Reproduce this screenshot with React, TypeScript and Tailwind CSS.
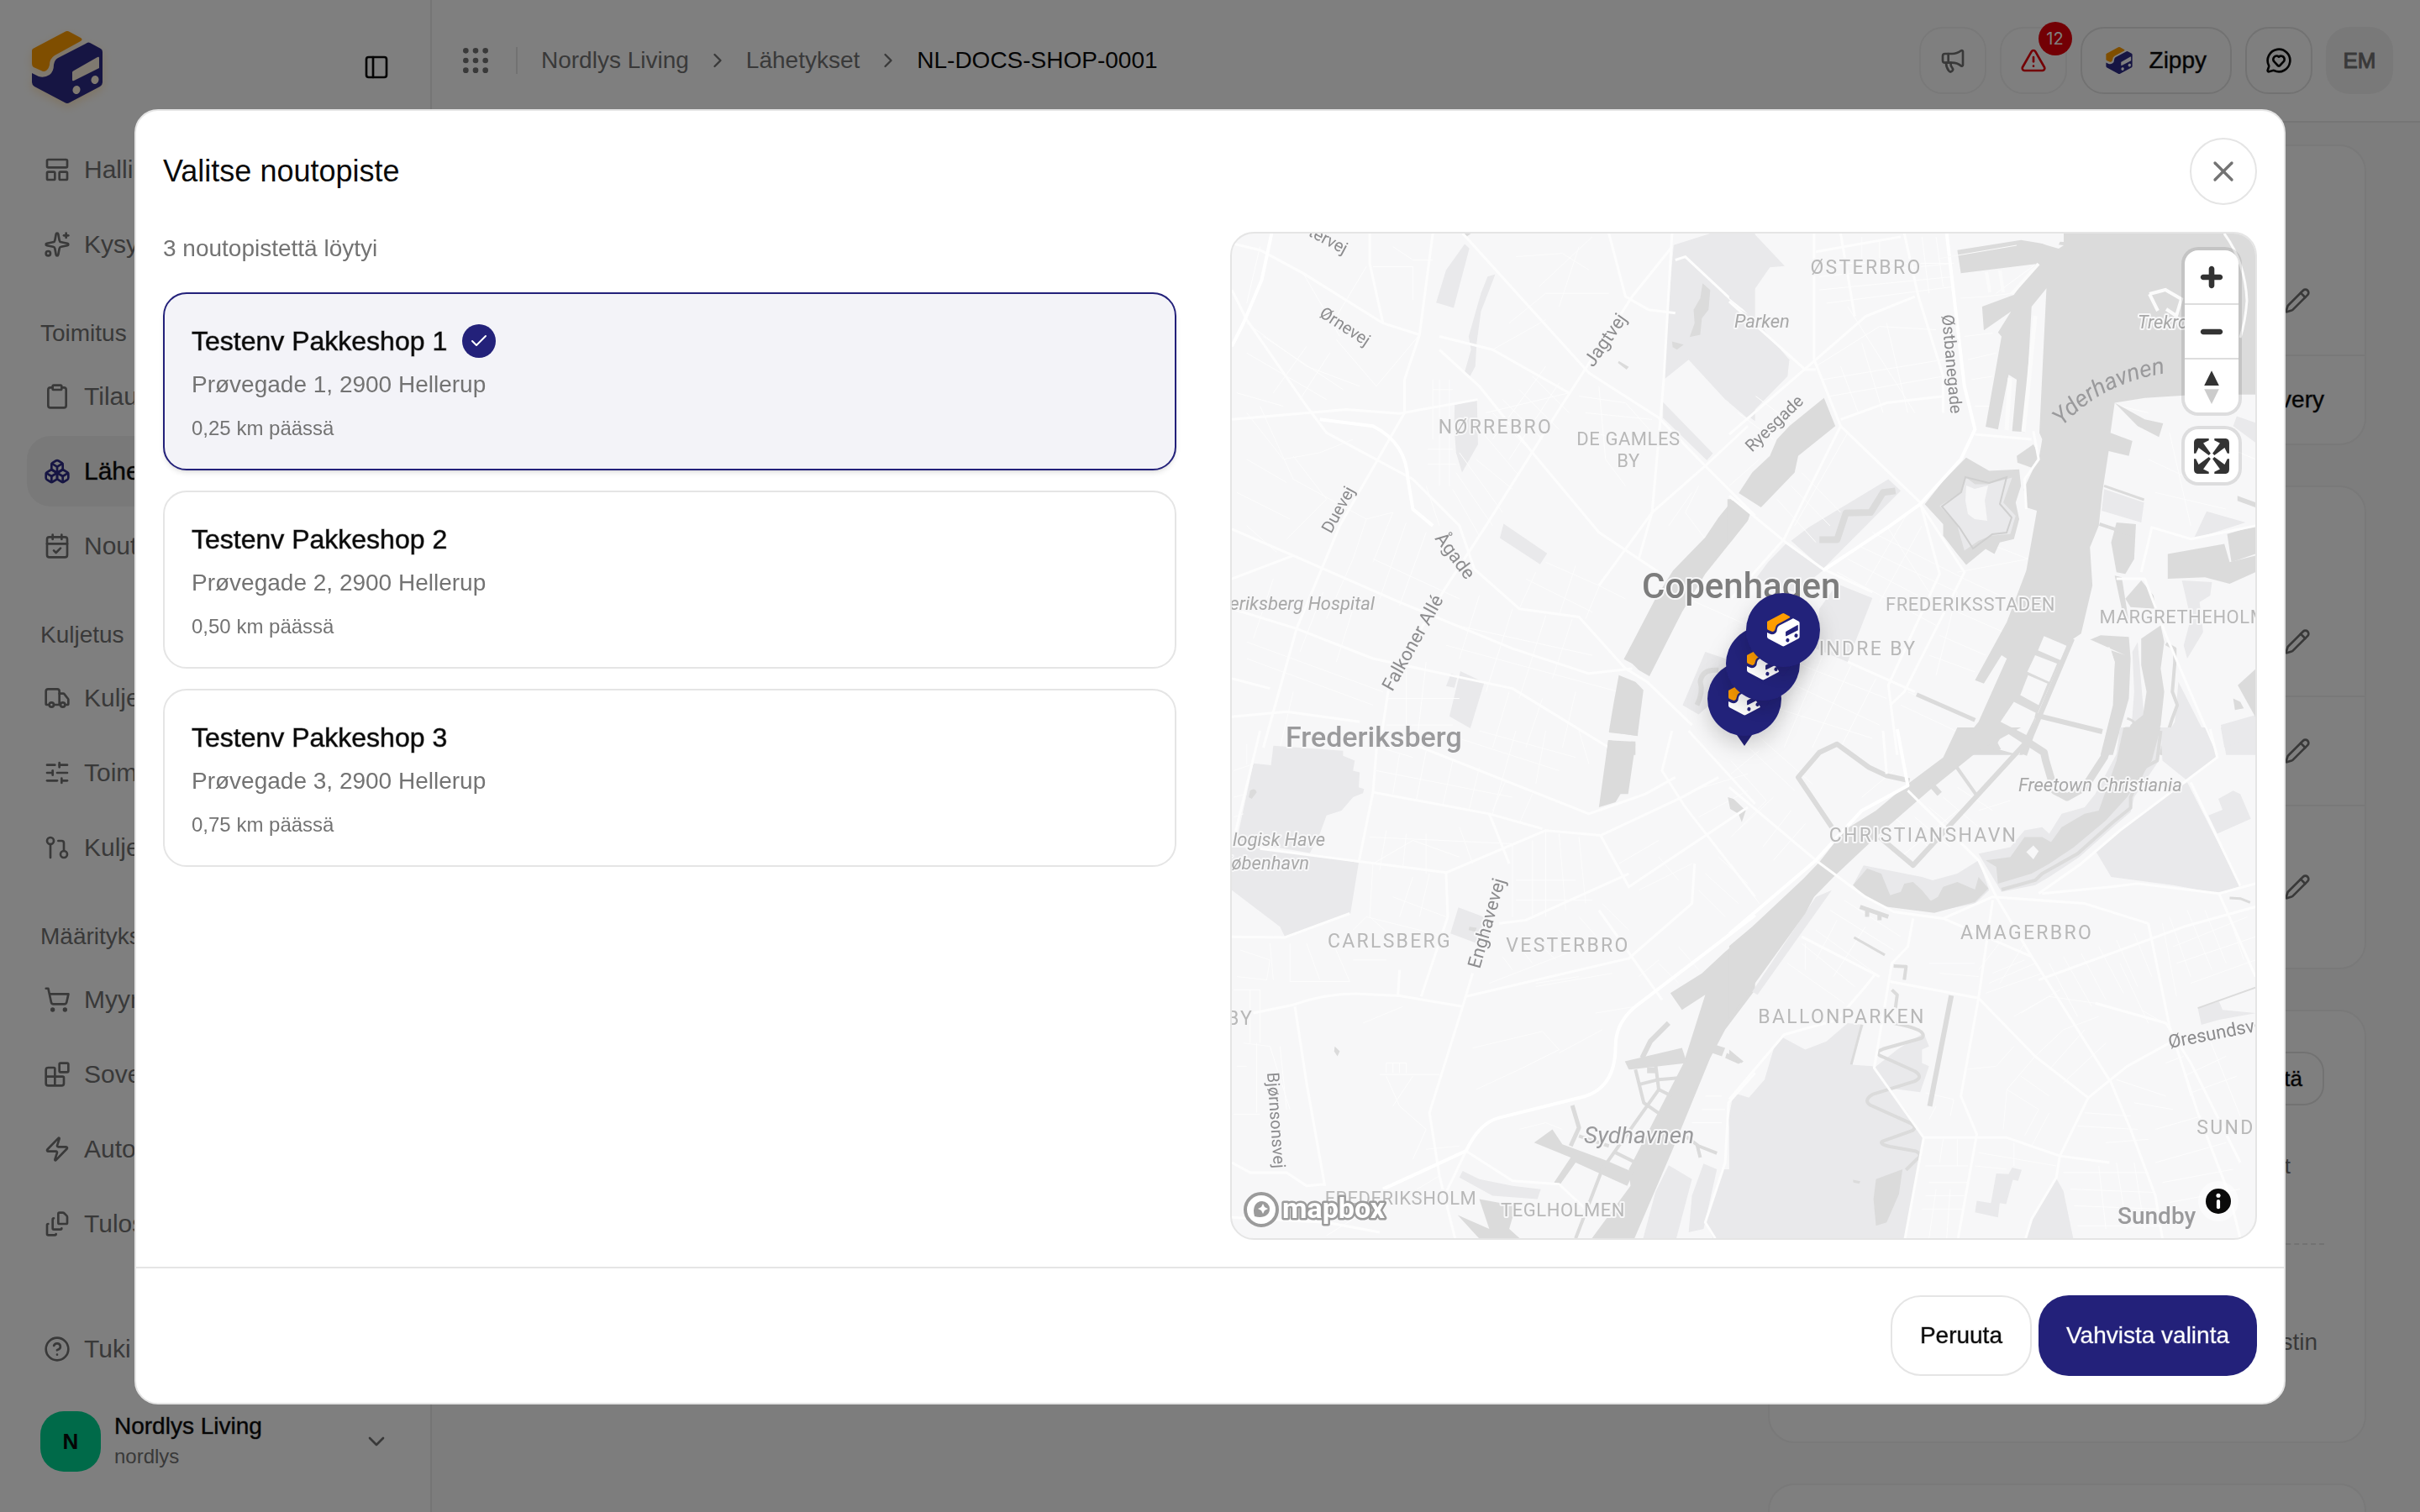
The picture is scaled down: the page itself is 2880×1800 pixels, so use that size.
import { useState } from "react"
import type { ReactNode } from "react"
import {
  Blocks,
  Boxes,
  CalendarCheck,
  Check,
  ChevronDown,
  ChevronRight,
  CircleQuestionMark,
  Clipboard,
  FileStack,
  GitPullRequest,
  Grip,
  LayoutPanelTop,
  Megaphone,
  MessageCircleHeart,
  PanelLeft,
  Pencil,
  ShoppingCart,
  SlidersHorizontal,
  Sparkles,
  TriangleAlert,
  Truck,
  X,
  Zap,
} from "lucide-react"
import type { LucideIcon } from "lucide-react"

type NavEntry = { label: string; icon: LucideIcon; active?: boolean }
type NavGroup = { title?: string; items: NavEntry[] }

const navGroups: NavGroup[] = [
  {
    items: [
      { label: "Hallinta", icon: LayoutPanelTop },
      { label: "Kysy", icon: Sparkles },
    ],
  },
  {
    title: "Toimitus",
    items: [
      { label: "Tilaus", icon: Clipboard },
      { label: "Lähetys", icon: Boxes, active: true },
      { label: "Nouto", icon: CalendarCheck },
    ],
  },
  {
    title: "Kuljetus",
    items: [
      { label: "Kuljetus", icon: Truck },
      { label: "Toimitus", icon: SlidersHorizontal },
      { label: "Kuljetus", icon: GitPullRequest },
    ],
  },
  {
    title: "Määritykset",
    items: [
      { label: "Myynti", icon: ShoppingCart },
      { label: "Sovellus", icon: Blocks },
      { label: "Autom.", icon: Zap },
      { label: "Tulostus", icon: FileStack },
    ],
  },
]

const pickupPoints = [
  { id: 1, name: "Testenv Pakkeshop 1", address: "Prøvegade 1, 2900 Hellerup", distance: "0,25 km päässä" },
  { id: 2, name: "Testenv Pakkeshop 2", address: "Prøvegade 2, 2900 Hellerup", distance: "0,50 km päässä" },
  { id: 3, name: "Testenv Pakkeshop 3", address: "Prøvegade 3, 2900 Hellerup", distance: "0,75 km päässä" },
]

export default function App() {
  const [selected, setSelected] = useState(1)

  return (
    <div className="relative flex h-screen overflow-hidden bg-white font-['Liberation_Sans',Arial,sans-serif] text-[28px] leading-10 text-[#0a0a0a]">
      <Sidebar />
      <div className="flex min-w-0 flex-1 flex-col">
        <TopBar />
        <ShipmentDetails />
      </div>

      {/* overlay + dialog */}
      <div className="fixed inset-0 z-10 flex items-center justify-center bg-black/50 px-40 pt-0.5">
        <div
          role="dialog"
          aria-modal="true"
          aria-labelledby="dialog-title"
          className="flex w-full max-w-[2560px] flex-col rounded-[28px] border-2 border-[#e5e5e5] bg-white"
        >
          <div className="flex items-center justify-between px-8 pt-8">
            <h2 id="dialog-title" className="text-[36px] leading-[48px]">
              Valitse noutopiste
            </h2>
            <button
              type="button"
              aria-label="Sulje"
              className="flex size-20 items-center justify-center rounded-full border-2 border-[#e5e5e5] text-[#737373]"
            >
              <X className="size-10" />
            </button>
          </div>

          <div className="grid grid-cols-2 gap-12 p-8">
            <div className="flex flex-col pr-4">
              <p className="mb-8 text-[#737373]">3 noutopistettä löytyi</p>
              <div className="flex flex-col gap-6">
                {pickupPoints.map((p) => (
                  <PickupCard
                    key={p.id}
                    name={p.name}
                    address={p.address}
                    distance={p.distance}
                    selected={p.id === selected}
                    onSelect={() => setSelected(p.id)}
                  />
                ))}
              </div>
            </div>
            <PickupMap />
          </div>

          <div className="flex justify-end gap-2 border-t-2 border-[#e5e5e5] p-8">
            <button
              type="button"
              className="h-24 rounded-[36px] border-2 border-[#e5e5e5] px-[33px] [-webkit-text-stroke:1px_rgb(10_10_10/0.4)]"
            >
              Peruuta
            </button>
            <button
              type="button"
              className="h-24 rounded-[36px] bg-[#23217a] px-[33px] text-white [-webkit-text-stroke:1px_rgb(255_255_255/0.3)]"
            >
              Vahvista valinta
            </button>
          </div>
        </div>
      </div>
    </div>
  )
}

function Sidebar() {
  return (
    <aside className="flex w-[514px] shrink-0 flex-col border-r-2 border-[#ebebeb] bg-white">
      <div className="flex h-40 shrink-0 items-center justify-between pr-12 pl-[38px]">
        <a href="#" aria-label="Etusivu" className="drop-shadow-[0_4px_6px_rgba(250,180,60,0.3)]">
          <Logo className="h-[86px] w-[84px]" body="#2d2a86" accent="#ff9d00" holes="#fff3e0" />
        </a>
        <button type="button" aria-label="Pienennä sivupalkki">
          <PanelLeft className="size-8" />
        </button>
      </div>

      <nav className="flex flex-1 flex-col px-8">
        {navGroups.map((group, i) => (
          <div key={i} className="flex flex-col">
            {group.title && (
              <h3 className="mt-[33px] flex h-16 items-center pb-0.5 pl-4 text-[#737373]">{group.title}</h3>
            )}
            <div className="flex flex-col gap-[5px]">
              {group.items.map((item, j) => (
                <NavLink key={j} {...item} />
              ))}
            </div>
          </div>
        ))}
      </nav>

      <div className="flex flex-col gap-5 px-8 pb-9">
        <NavLink label="Tuki" icon={CircleQuestionMark} />
        <button type="button" className="flex h-24 items-center gap-4 px-4 text-left">
          <span className="flex size-[72px] items-center justify-center rounded-[28px] bg-emerald-400 text-[26px] font-bold">
            N
          </span>
          <span className="flex flex-1 flex-col">
            <span className="leading-9 [-webkit-text-stroke:1px_rgb(10_10_10/0.4)]">Nordlys Living</span>
            <span className="text-2xl leading-9 text-[#737373]">nordlys</span>
          </span>
          <ChevronDown className="size-8 text-[#737373]" />
        </button>
      </div>
    </aside>
  )
}

function NavLink({ label, icon: Icon, active }: NavEntry) {
  return (
    <a
      href="#"
      className={
        active
          ? "flex h-[84px] items-center gap-4 rounded-[28px] bg-[#f3f3f3] px-5 text-[30px] [-webkit-text-stroke:1px_rgb(10_10_10/0.4)]"
          : "flex h-[84px] items-center gap-4 rounded-[28px] px-5 text-[30px] text-[#737373]"
      }
    >
      <Icon className={active ? "size-8 text-[#2d2a86]" : "size-8"} />
      {label}
    </a>
  )
}

function TopBar() {
  return (
    <header className="flex h-[146px] shrink-0 items-center justify-between border-b-2 border-[#ebebeb] bg-white px-8">
      <div className="flex items-center gap-7">
        <button type="button" aria-label="Sovellukset" className="text-[#737373]">
          <Grip className="size-10" />
        </button>
        <div className="h-8 w-0.5 bg-[#e5e5e5]" />
        <nav aria-label="Murupolku" className="flex items-center gap-5 text-[#737373]">
          <a href="#">Nordlys Living</a>
          <ChevronRight className="size-7" />
          <a href="#">Lähetykset</a>
          <ChevronRight className="size-7" />
          <span className="text-[#0a0a0a]">NL-DOCS-SHOP-0001</span>
        </nav>
      </div>

      <div className="flex items-center gap-4">
        <button
          type="button"
          aria-label="Uutiset"
          className="flex size-20 items-center justify-center rounded-[28px] border-2 border-[#f2f2f2] text-[#737373]"
        >
          <Megaphone className="size-8" />
        </button>
        <button
          type="button"
          aria-label="Hälytykset"
          className="relative flex size-20 items-center justify-center rounded-[28px] border-2 border-[#f2f2f2] text-[#e7000b]"
        >
          <TriangleAlert className="size-8" />
          <span className="absolute -top-2 -right-2 flex size-10 items-center justify-center rounded-full bg-[#e7000b] font-['Inter',sans-serif] text-xl text-white">
            12
          </span>
        </button>
        <button
          type="button"
          className="flex h-20 items-center gap-5 rounded-[28px] border-2 border-[#e5e5e5] px-7 [-webkit-text-stroke:1px_rgb(10_10_10/0.4)]"
        >
          <Logo className="size-8" body="#2d2a86" accent="#ff9d00" holes="#ffffff" />
          Zippy
        </button>
        <button
          type="button"
          aria-label="Palaute"
          className="flex size-20 items-center justify-center rounded-[28px] border-2 border-[#e5e5e5]"
        >
          <MessageCircleHeart className="size-8" />
        </button>
        <button
          type="button"
          className="flex size-20 items-center justify-center rounded-[28px] bg-[#f3f3f3] text-[26px] text-[#737373] [-webkit-text-stroke:1px]"
        >
          EM
        </button>
      </div>
    </header>
  )
}

function ShipmentDetails() {
  return (
    <main className="flex flex-1 flex-col items-end overflow-hidden bg-[#fafafa] px-16 pt-[26px]">
      <div className="flex w-[712px] flex-col gap-12">
        <DetailCard>
          <div className="h-[120px]" />
          <EditRow label="Muokkaa lähettäjää" className="h-32" />
          <div className="flex h-[106px] items-center justify-end border-t-2 border-[#f2f2f2] px-12 [-webkit-text-stroke:1px_rgb(10_10_10/0.4)]">
            Delivery
          </div>
        </DetailCard>

        <DetailCard>
          <div className="h-[120px]" />
          <EditRow label="Muokkaa vastaanottajaa" className="h-32" />
          <EditRow label="Muokkaa yhteystietoja" className="h-[130px] border-t-2 border-[#f2f2f2]" />
          <EditRow label="Muokkaa osoitetta" className="h-[194px] border-t-2 border-[#f2f2f2]" />
        </DetailCard>

        <DetailCard>
          <div className="flex h-[512px] flex-col items-end px-12 pt-12">
            <button
              type="button"
              className="h-16 rounded-3xl border-2 border-[#e5e5e5] px-6 text-[26px] leading-8 [-webkit-text-stroke:1px_rgb(10_10_10/0.4)]"
            >
              Näytä
            </button>
            <p className="mt-[52px] w-full pr-10 text-right text-[26px] text-[#737373]">tiedot</p>
            <div className="mt-[72px] w-full border-t-2 border-dashed border-[#e5e5e5]" />
            <p className="mt-[96px] pr-2 text-[#737373]">Tulostin</p>
          </div>
        </DetailCard>

        <DetailCard>
          <div className="h-48" />
        </DetailCard>
      </div>
    </main>
  )
}

function DetailCard({ children }: { children: ReactNode }) {
  return <section className="rounded-[32px] border-2 border-[#f2f2f2] bg-white">{children}</section>
}

function EditRow({ label, className }: { label: string; className: string }) {
  return (
    <div className={`flex items-center justify-end pr-16 ${className}`}>
      <button type="button" aria-label={label} className="text-[#737373]">
        <Pencil className="size-8" />
      </button>
    </div>
  )
}

function PickupCard({
  name,
  address,
  distance,
  selected,
  onSelect,
}: {
  name: string
  address: string
  distance: string
  selected: boolean
  onSelect: () => void
}) {
  return (
    <button
      type="button"
      aria-pressed={selected}
      onClick={onSelect}
      className={
        selected
          ? "flex flex-col rounded-[28px] border-2 border-[#23217a] bg-[#f3f3f8] p-8 text-left shadow-md"
          : "flex flex-col rounded-[28px] border-2 border-[#e5e5e5] bg-white p-8 text-left"
      }
    >
      <span className="flex h-12 items-center gap-[18px] text-[32px] [-webkit-text-stroke:1px_rgb(10_10_10/0.5)]">
        {name}
        {selected && (
          <span className="flex size-10 items-center justify-center rounded-full bg-[#23217a] text-white">
            <Check className="size-6" />
          </span>
        )}
      </span>
      <span className="mt-1.5 leading-[44px] text-[#737373]">{address}</span>
      <span className="mt-3.5 text-2xl leading-8 text-[#737373]">{distance}</span>
    </button>
  )
}

function PickupMap() {
  return (
    <div className="relative h-[1200px] overflow-hidden rounded-[28px] border-2 border-[#e5e5e5] bg-[#f7f7f8]">
      <MapCanvas />

      {/* navigation controls */}
      <div className="absolute top-5 right-5 flex flex-col gap-5">
        <div className="flex flex-col overflow-hidden rounded-2xl bg-white shadow-[0_0_0_4px_rgba(0,0,0,0.1)]">
          <MapButton label="Lähennä">
            <path
              d="M14.5 8.5c-.75 0-1.5.75-1.5 1.5v3h-3c-.75 0-1.5.75-1.5 1.5S9.25 16 10 16h3v3c0 .75.75 1.5 1.5 1.5S16 19.75 16 19v-3h3c.75 0 1.5-.75 1.5-1.5S19.75 13 19 13h-3v-3c0-.75-.75-1.5-1.5-1.5z"
              fill="#333"
            />
          </MapButton>
          <div className="h-0.5 bg-[#ddd]" />
          <MapButton label="Loitonna">
            <path
              d="M10 13c-.75 0-1.5.75-1.5 1.5S9.25 16 10 16h9c.75 0 1.5-.75 1.5-1.5S19.75 13 19 13h-9z"
              fill="#333"
            />
          </MapButton>
          <div className="h-0.5 bg-[#ddd]" />
          <MapButton label="Palauta pohjoinen">
            <path d="M10.5 14l4-8 4 8h-8z" fill="#333" />
            <path d="M10.5 16l4 8 4-8h-8z" fill="#ccc" />
          </MapButton>
        </div>
        <div className="overflow-hidden rounded-2xl bg-white shadow-[0_0_0_4px_rgba(0,0,0,0.1)]">
          <MapButton label="Koko näyttö">
            <path
              d="M24 16v5.5c0 1.75-.75 2.5-2.5 2.5H16v-1l3-1.5-4-5.5 1-1 5.5 4 1.5-3h1zM6 16l1.5 3 5.5-4 1 1-4 5.5 3 1.5v1H7.5C5.75 24 5 23.25 5 21.5V16h1zm7-11v1l-3 1.5 4 5.5-1 1-5.5-4L6 13H5V7.5C5 5.75 5.75 5 7.5 5H13zm11 2.5c0-1.75-.75-2.5-2.5-2.5H16v1l3 1.5-4 5.5 1 1 5.5-4 1.5 3h1V7.5z"
              fill="#333"
            />
          </MapButton>
        </div>
      </div>

      {/* attribution */}
      <a href="#" aria-label="Mapbox" className="absolute bottom-2 left-3">
        <svg viewBox="0 0 180 50" className="h-[50px] w-[180px]">
          <circle cx="23" cy="24" r="19" fill="#fff" stroke="#9b9b9b" strokeWidth="4" />
          <path d="M15 32C12 22 16 14 24 14A9 9 0 0 1 33 23C33 31 25 35 15 32Z" fill="#9b9b9b" />
          <path d="M25 17L27 21L31 23L27 25L25 29L23 25L19 23L23 21Z" fill="#fff" />
          <text
            x="48"
            y="34"
            className="font-['Roboto',sans-serif] text-[34px] font-bold"
            fill="#fff"
            stroke="#9b9b9b"
            strokeWidth="5"
            strokeLinejoin="round"
            paintOrder="stroke"
          >
            mapbox
          </text>
        </svg>
      </a>
      <button
        type="button"
        aria-label="Kartan tiedot"
        className="absolute right-5 bottom-5 flex size-12 items-center justify-center rounded-3xl bg-white/50"
      >
        <svg viewBox="0 0 20 20" className="size-[30px]">
          <circle cx="10" cy="10" r="10" fill="#0a0a0a" />
          <circle cx="10" cy="5.5" r="1.7" fill="#fff" />
          <rect x="8.6" y="8.6" width="2.8" height="7.6" rx="1.4" fill="#fff" />
        </svg>
      </button>
    </div>
  )
}

function MapButton({ label, children }: { label: string; children: ReactNode }) {
  return (
    <button type="button" aria-label={label} className="flex h-[63px] w-16 items-center justify-center">
      <svg viewBox="0 0 29 29" className="size-16">
        {children}
      </svg>
    </button>
  )
}

// each tile has its own local coordinate space
const tiles = [
  {
    transform: "translate(-6 -8) scale(0.3954)",
    parks: [
      "716,52 730,65 683,244 630,228 660,130",
      "808,143 790,190 765,255 752,350 748,420 732,450 715,440 735,370 728,330 745,270 765,200 785,150",
      "686,537 753,520 756,655 708,740 690,680 684,600",
      "833,894 964,983 943,1016 822,937",
      "703,1338 775,1372 733,1510 670,1474",
      "675,1345 695,1352 685,1388 660,1383",
      "1345,55 1455,20 1590,20 1590,585 1500,520 1390,400 1315,460 1322,330 1340,110",
      "1313,528 1463,682 1445,703 1313,575",
      "1440,1280 1530,1310 1500,1400 1420,1468 1372,1440",
    ],
    water: [
      "M712 20H735L722 30Z",
      "M1432 170L1455 190L1450 250L1430 275L1425 325L1393 332L1408 290L1405 250L1425 215Z",
      "M1340 345L1375 355L1355 370L1342 362Z",
      "M1180 404L1210 422L1203 430L1177 410Z",
      "M1525 820L1575 865L1568 885L1440 1045L1370 1160L1272 1353L1240 1335L1220 1315L1195 1302L1290 1120L1343 1035L1440 935L1480 875Z",
      "M1180 1350L1230 1370L1254 1395L1236 1533L1150 1520L1165 1430Z",
      "M1148 1546L1230 1550V1590H1143Z",
    ],
    canals: [{ d: "M1480 1335Q1430 1330 1425 1370Q1435 1400 1415 1440", w: 6 }],
    roads: [
      "M15 190L60 280L240 540L300 620L560 760L700 900L745 1030L880 1150L1060 1175L1200 1330L1265 1370L1400 1500",
      "M15 580L360 550L520 562L755 520",
      "M15 50L100 70L230 140L470 290L580 325",
      "M430 20V110L470 290",
      "M620 20L580 325L535 460V560L340 900L210 1210L110 1568",
      "M710 20L810 130L1090 440L1300 575L1440 720L1590 870",
      "M1340 60L1220 210L1000 550L780 900L650 1100L490 1370L460 1568",
      "M1150 20L1200 210L1270 250L1350 260",
      "M1340 20L1315 460L1305 580L1280 860L1240 1000",
      "M640 370L760 480L920 680L1120 920L1300 1040",
      "M640 330L800 370L1030 500",
      "M15 910L200 990L520 1130L860 1270L1090 1345L1220 1330",
      "M15 1060L200 990",
      "M15 1150L210 1210L440 1300L860 1390L1150 1568",
      "M15 1360L130 1390",
      "M1440 720L1280 860L1120 1080",
      "M1440 720L1568 600",
      "M15 1475L180 1460L400 1490",
      "M1350 100L1380 90L1540 240L1590 290",
    ],
    highways: [
      "M135 20L105 160L50 290L15 360",
      "M280 580L440 600Q540 650 545 760L560 850L620 900",
    ],
    streets: [
      "M100 60L60 230M230 140L340 330M420 120L330 270M580 325L450 480L330 340M60 290L240 420L400 480",
      "M620 460V640M640 460V780M670 460V780M605 715H690M620 490H680M605 670H680M600 780L640 900",
      "M60 560L170 700L280 680L380 640M100 540L200 760L420 880L500 860M200 690L300 820L180 940M60 700L180 770",
      "M420 880L380 1000L300 1180M500 860L440 1010M540 890L460 1120M600 920L520 1140M440 1000L700 1120",
      "M750 700L860 790M770 620L880 750M800 560L920 680M830 520L950 640M880 490L1000 610M920 450L1030 560",
      "M780 560L1030 500M800 640L960 420M850 700L1000 470M700 680L830 860M690 740L800 900M680 790L760 930",
      "M870 90L1010 80L1090 130M960 200H1150M940 180L1100 30M1000 240L1060 60M850 290L960 200M800 370L960 280",
      "M1060 510L1200 530L1280 620M1080 560L1280 580M1100 620L1290 660M1120 480L1140 700L1200 780",
      "M960 1010L1120 1080L1200 1120M900 1060L1100 1160M880 1150L930 1040M1000 1170L1050 1020M1080 1180L1130 1060",
      "M760 1110L700 1300M860 1150L780 1400M960 1170L880 1420M1040 1180L980 1360M690 1200L1100 1290M660 1260L1180 1400",
      "M140 1060L80 1240M290 1100L220 1280M380 1150L330 1310M60 1250L470 1400M60 1300L440 1440M200 1400L160 1568",
      "M540 1320V1568M600 1310L570 1568M480 1420H700M480 1500H680M850 1400L800 1568M950 1420L900 1568M1050 1400L1010 1568",
      "M60 380L300 520M110 330L350 490M30 500L170 540M60 900L150 980M30 800L190 880M240 360L140 500M310 380L220 520",
      "M440 120H560V220M500 60L560 100H620M1420 780L1380 860L1440 940M1400 800L1330 900M1300 1080L1568 1200",
    ],
  },
  {
    transform: "translate(594 -8) scale(0.4209 0.3954)",
    parks: [
      "-5,20 65,20 152,118 110,122 30,245 -5,215",
      "-5,230 60,270 165,400 160,450 45,575 -5,530",
      "445,760 480,795 260,1030 170,945 220,905",
      "155,955 260,1035 180,1100 70,1060 105,1010",
      "300,1075 400,1118 355,1240 330,1310 240,1270 250,1150",
      "1055,790 1168,830 1160,890 1048,855",
      "1275,1065 1360,1070 1355,1110 1325,1130 1335,1220 1290,1300 1280,1260 1300,1180",
      "1345,857 1455,890 1308,940",
      "1430,570 1483,590 1483,650 1420,600",
      "1265,1370 1370,1590 1200,1590 1255,1490",
      "1385,1500 1483,1470 1483,1590 1400,1590",
      "1150,1250 1170,1500 1130,1540 1140,1400 1135,1280",
    ],
    water: [
      "M640 70L820 40L925 58L940 20H1490V505H1320L1170 515L1085 530L1073 620L1135 645L1125 690L1068 675L1050 800L1040 900L1015 965L1022 1080L990 1225L955 1250L865 1470L825 1590H625L700 1490L780 1300L765 1290L715 1375L690 1365L780 1190L835 1035L865 855L835 845L828 790L872 690L880 640L872 620L892 185L850 240L830 618L795 615L808 460L785 445L755 610L720 602L765 330L755 318L792 255L715 312L710 240L800 205L862 112L650 140Z",
      "M263 515L295 600L190 690L180 740L85 845L22 802L60 740L110 690L130 640L165 600Z",
      "M-10 820L0 820L50 878L0 948L-10 955Z",
      "M665 695L730 735L815 730L820 780L805 830L815 880L800 940L760 950L745 985L720 970L665 1018L640 985L600 930V895L548 835L600 765Z",
      "M1085 530L1170 580L1222 592L1210 633L1150 600Z",
      "M1235 985L1395 955L1410 1010L1483 990V1040L1410 1075L1340 1055L1235 1060Z",
      "M1403 925L1483 900V985L1415 1010Z",
      "M1115 1120L1160 1065L1195 1110L1200 1150L1130 1145Z",
      "M1090 890L1145 895L1140 1000L1115 1045L1090 1040L1075 950Z",
      "M1085 1050L1105 1055L1125 1190L1105 1150Z",
      "M1432 810L1483 830V845L1432 825Z",
      "M1490 1325L1433 1380L1490 1490Z",
      "M1045 1230L1125 1235L1130 1300L1125 1420L1080 1590H1045L1080 1440L1085 1310L1070 1265L1020 1280L1000 1250Z",
      "M1160 1240L1215 1200L1225 1250L1215 1330L1225 1400L1215 1500L1190 1590H1095L1130 1500L1165 1470L1175 1400L1160 1320Z",
      "M808 690L855 655L872 690L850 725L810 710Z",
      "M1420 1420L1440 1430L1450 1450L1425 1455Z",
    ],
    canals: [
      { d: "M250 942H300L325 862L395 860L430 800L465 795", w: 8 },
      { d: "M525 1408L690 1485", w: 5 },
      { d: "M1055 780L1168 822", w: 3 },
      { d: "M1042 895L1140 930", w: 4 },
      { d: "M1230 1255L1255 1270V1310L1248 1400L1262 1440L1248 1480L1215 1590", w: 4 },
      { d: "M965 1240L850 1530L830 1590M860 1470L1050 1520", w: 6 },
      { d: "M1120 1480Q1150 1490 1140 1510H1115", w: 3 },
    ],
    islands: [
      "665,755 690,775 725,775 795,755 770,830 805,870 790,925 735,930 700,945 660,975 640,900 590,840 650,800",
      "885,1232 950,1262 932,1305 868,1275",
      "860,1290 922,1315 900,1370 838,1340",
      "840,1350 895,1375 870,1440 818,1410",
      "800,1430 865,1465 835,1530 762,1490",
      "775,1515 830,1545 815,1590 745,1570",
      "1115,1290 1075,1275 1085,1310 1075,1440 1040,1510 880,1450 975,1250 1010,1240",
    ],
    roads: [
      "M235 20V400L310 600L535 830L590 1045L445 1380L470 1590",
      "M-5 225L210 430L240 430",
      "M-5 625L240 400L380 270L520 210",
      "M-5 810L155 950L260 1030L400 1100",
      "M535 835L660 1040L490 1400L450 1440",
      "M310 20L350 270",
      "M490 20L530 210L600 450V560",
      "M310 600L150 940L0 1120",
      "M310 580L440 530L600 510",
      "M690 625L850 640",
      "M330 1310L520 1400",
      "M1090 1060L1170 1060L1230 1230L1375 1590",
      "M1160 1040L1190 905L1300 940L1483 900",
      "M240 75L480 30",
      "M855 615L870 700L830 760L835 850",
    ],
    highways: ["M610 20L660 480L690 610L650 700L535 835L450 900L260 1035"],
    streets: [
      "M250 110H620M250 150L630 110M250 190L630 150M270 230L630 180M420 40V120M370 30V140M540 30L560 200M580 30L600 180",
      "M240 420L420 300L580 310M260 460L600 400M280 510L600 450M310 420L360 560M370 350L430 560M440 290L500 560M330 240L520 560",
      "M660 330L740 320M670 400L750 380M680 460L740 450M690 540L730 540M650 215L720 210L800 200",
      "M80 700L-5 780M120 640L20 560M170 590L70 510M200 740L310 860M170 780L280 900M130 820L240 950M330 620L180 900",
      "M330 1000L600 1150M360 960L640 1100M400 920L660 1060M440 900L560 1100M300 1040L580 1200M500 860L380 1080M540 900L420 1130",
      "M600 900L840 1000M640 1040L840 1000M660 1060L800 1130M620 1150L770 1220M590 1230L720 1290M560 1290L690 1340M640 1100L580 1350",
      "M200 1320L440 1420M180 1380L420 1500M100 1440L400 1540M260 1290L150 1568M340 1320L230 1568M410 1360L310 1568",
      "M480 1440L640 1520M500 1400L650 1470M940 1360L1060 1400M960 1300L1070 1320M900 1420L1020 1450",
      "M865 110L750 200M1100 540L1180 560M1180 700L1300 760M1200 800L1400 850M1240 620L1300 900M1350 640L1483 700",
    ],
  },
  {
    transform: "translate(-6 592) scale(0.3954)",
    parks: [
      "140,45 350,60 350,75 385,90 380,120 400,125 397,170 413,175 410,188 380,200 345,240 300,255 280,310 250,368 30,330 80,98 133,104",
      "15,350 120,355 397,397 372,550 175,620 160,590 15,480",
      "697,532 805,572 780,650 673,610",
      "1330,1308 1400,1350 1350,1540 1250,1540 1290,1390",
      "1435,1303 1475,1320 1435,1500 1390,1510 1400,1400",
      "1525,1090 1590,1110 1590,1540 1470,1540 1440,1480 1490,1320 1525,1320 1510,1170",
      "710,1325 760,1350 860,1370 945,1380 935,1410 800,1400 700,1345",
    ],
    water: [
      "M1148 28L1230 40L1208 190L1185 190L1170 215L1120 230Z",
      "M1152 0H1237V15L1150 5Z",
      "M1590 590V780L1500 900L1455 985L1340 1265L1222 1540H1090L1215 1370L1210 1320L1375 1000L1440 795L1370 840L1335 790L1430 730L1500 665Z",
      "M1198 995L1370 955L1385 1000L1210 1020Z",
      "M925 1240L980 1200L1010 1245L1145 1295L1225 1330L1205 1370L1050 1300L1000 1370L985 1360L1035 1285Z",
      "M695 1458L790 1500L760 1410L870 1430L850 1500L895 1540H770Z",
      "M1508 200L1525 205L1562 240L1550 275L1540 250L1515 235Z",
      "M70 180Q85 170 90 185L75 205L66 200Z",
      "M325 950L340 965L333 980L323 965Z",
      "M730 590L752 593L748 605L728 600Z",
      "M1470 945L1500 955L1490 980L1460 970ZM1505 970L1555 995L1540 1003L1500 985Z",
    ],
    canals: [
      { d: "M1250 985L1275 935L1330 880", w: 6 },
      { d: "M1040 1128L1060 1195L1035 1250", w: 5 },
      { d: "M1230 1020L1255 1120L1305 1155", w: 4 },
      { d: "M1290 1000L1300 1080L1130 1320L1050 1528", w: 4 },
      { d: "M1240 1065L1300 1050L1360 1045M1300 1080L1340 1100M1170 1270L1230 1300M1060 1220L1150 1250", w: 4 },
      { d: "M1380 1220L1420 1250L1475 1272M1415 1245L1425 1285", w: 4 },
      { d: "M1265 1022H1290", w: 7 },
    ],
    roads: [
      "M15 620L175 622L370 550",
      "M100 0L20 330",
      "M100 355L660 427L960 300L1125 315L1370 200L1480 140",
      "M560 40L1090 250L1260 190L1350 140",
      "M440 185L790 250L950 295",
      "M455 0L440 185L397 397",
      "M660 427L665 560L585 800",
      "M80 850L200 825Q300 790 400 792L520 798L710 830",
      "M205 830L240 1060L295 1370",
      "M850 400L790 250M740 730L710 830L610 1150L640 1340L690 1540",
      "M720 800L1210 685L1400 520L1408 400",
      "M1125 315L1210 470L1568 230",
      "M820 580L900 570L1210 430",
      "M1120 540L1310 810",
      "M520 720L515 800",
      "M1390 0L1590 220",
      "M1340 0L1310 120L1380 230L1590 500",
      "M720 1265L860 1355L1000 1365L1080 1440",
      "M720 1265L660 1390",
      "M15 1300L70 1330H180L240 1370L295 1365",
      "M15 1465L300 1480L460 1510",
      "M1590 1030L1510 1120L1500 1300L1440 1480L1470 1528",
    ],
    highways: [
      "M470 1380L720 1265Q760 1180 820 1165L1080 1100Q1170 1070 1170 950Q1170 880 1230 830L1590 555",
    ],
    streets: [
      "M460 50L560 80M450 120L860 200M520 70L500 190M600 60L570 210M680 90L650 225M760 110L730 235M840 150L800 240M920 190L880 280",
      "M690 20L1000 120M760 0L1050 80M870 0L800 250M960 0L930 160M1060 0L1090 100",
      "M430 320L860 340M440 400L560 330L700 380M480 300L460 420M540 310L530 410M600 310V430M700 290L740 400",
      "M440 400L430 560L520 640M500 500L660 560M560 440L520 560M610 430L580 560M420 560L660 620M380 600L420 560",
      "M860 340V560M920 330V560M960 300V560M1000 310L1020 540M1060 320L1080 520M870 450H1050M870 510H1100",
      "M790 760L1100 640M830 680L860 720M880 650L920 700M940 640L990 690M1000 600L1060 660M1060 560L1140 650M1130 520L1210 600",
      "M1180 400L1300 330M1240 480L1400 400M1300 380L1360 450M1210 690L1350 560M1400 180L1568 130M1420 260L1568 180",
      "M930 770L1160 730M930 760L1060 740M740 955L950 905L1000 960L880 1020L750 1080M1000 970L1130 900",
      "M20 780H100V940M70 780V940M50 940L130 950L190 1140M90 940V1150M160 950L180 1140M20 1155H100M30 1010H60",
      "M480 1000H540M480 1000V1030M500 1000V1030M520 1000V1030M540 1000V1030M460 1035H640M480 1040L520 1130L600 1200M560 1040L500 1130",
      "M40 660L130 690L120 750L30 740M130 640L140 750M190 640V755H370L320 640M240 640L280 750M380 690H480M410 880L530 830",
      "M600 1260L700 1250M560 1290L600 1200M640 1340L540 1400M300 1520L460 1420M880 1200L960 1180L1010 1200M1110 850L1230 830",
      "M60 40V100M20 120L80 100M20 200L60 190M20 260L50 250M1440 1100H1490M1430 1140H1500M1400 1180H1490",
      "M1420 480L1500 560M1440 430L1540 520M1480 380L1568 460M1360 650L1420 720M1300 700L1360 760M1240 740L1300 690",
    ],
  },
  {
    transform: "translate(594 592) scale(0.4209 0.3954)",
    parks: [
      "140,920 210,960 270,935 330,880 375,885 340,1005 400,1010 500,1150 545,1225 490,1540 -5,1540 -5,1170 45,1160 20,1110 50,1105 95,1050 120,960",
      "470,960 545,910 560,950 540,960 540,1000 560,1010 535,1088 440,1075 405,1015",
      "1290,155 1440,467 1380,490 1250,465 1075,440 1030,360 1170,240",
      "1215,-10 1340,-10 1375,75 1290,150 1220,90",
      "1420,180 1440,190 1470,265 1375,310 1350,255 1390,238 1378,205",
      "1385,-10 1483,-10 1483,15 1395,50",
      "1320,835 1380,815 1390,840 1483,850 1380,870 1330,885",
      "750,1333 785,1335 795,1315 822,1322 812,1355 797,1352 778,1425 760,1422 755,1465 690,1450 695,1415 735,1422",
      "920,1348 940,1385 970,1540 828,1540 860,1450",
      "240,500 285,480 75,795 60,785",
      "375,405 540,440 570,450 640,430 700,390 730,480 690,520 575,545 400,500 345,465",
      "700,370 790,350 830,300 880,290 900,310 935,250 1000,230 1030,190 1090,70 1100,-10 1220,-10 1210,90 1140,200 1130,245 1080,290 985,380 900,440 860,465 765,485",
    ],
    water: [
      "M640 -10H820L700 60L560 180L420 310L290 440L235 500L210 550L-5 868V648L60 590L205 445L250 395L320 300L410 240L500 160L600 80Z",
      "M345 465L385 415L425 430L450 495L480 485L490 460L515 455L540 480L565 512L585 500L600 470L640 455L690 478L700 440L728 475L690 515L575 548L440 530L380 500Z",
      "M720 390L790 380L830 320L880 320L905 335L935 290L1000 250L1040 240L1090 90L1110 -10H1215L1190 90L1120 200L1060 270L970 350L900 400L850 430L755 460L750 410Z",
      "M410 1350L485 1320L475 1395L440 1480L410 1490L403 1410Z",
      "M345 1352L366 1356L362 1364L346 1360Z",
      "M-5 960L35 995L30 1000L-5 985Z",
    ],
    canals: [
      { d: "M285 290L190 140L250 65L300 40L390 110L440 135L505 150", w: 6 },
      { d: "M830 40L515 405L420 320", w: 6 },
      { d: "M635 105L695 195", w: 4 },
      { d: "M565 160L590 190", w: 7 },
      { d: "M735 20L755 60", w: 8 },
      { d: "M790 0L885 65L890 90L915 180L950 200L1000 170L1055 80L1085 -10", w: 9 },
      { d: "M765 478L860 450L880 430L980 370L1080 275L1130 232V200L1170 110L1205 90L1215 0", w: 4 },
      { d: "M365 530L445 560M385 540V560M420 550V570", w: 5 },
      { d: "M348 622L435 675", w: 3 },
      { d: "M460 708L495 710L490 750", w: 4 },
      { d: "M455 780L470 795L465 835", w: 4 },
      { d: "M623 797L562 1130", w: 6 },
      { d: "M370 885L340 1005", w: 3 },
      { d: "M1410 503L1440 505L1468 517", w: 3 },
      { d: "M1320 835L1483 773", w: 2 },
      {
        d: "M460 880Q560 900 540 925L430 958Q400 970 430 982L520 1025Q545 1042 520 1055L400 1095Q370 1115 400 1130L505 1180Q530 1195 510 1205L430 1235Q415 1243 450 1252L520 1265Q545 1276 525 1290L495 1322",
        w: 4,
      },
    ],
    islands: ["835,365 855,345 870,362 855,387"],
    roads: [
      "M-5 170L240 390L380 500L460 545L600 565L740 500L1000 520L1180 580",
      "M500 180L700 390L750 500L850 680L1075 1060L1130 1200L1200 1400L1220 1528",
      "M600 565L720 620L850 680",
      "M515 565L500 650L455 700L405 1015L545 1225L490 1540",
      "M545 1225H780L930 1280L1070 1300",
      "M450 755L700 805L860 980L1010 1105L930 1280L920 1345L850 1470L830 1540",
      "M740 510L700 805L650 1100L695 1215L640 1540",
      "M870 750L1280 590L1483 530",
      "M1380 490L1483 740",
      "M1180 580L1240 890L1320 1150L1410 1400L1440 1528",
      "M880 490L1075 470L1150 460L1380 490L1483 460",
      "M-5 1110L150 915L300 870L380 770L410 730",
      "M200 620L420 740",
      "M1300 155L1440 467",
      "M1010 1105L1120 1010L1240 940",
      "M1030 820L1230 880L1300 1000L1440 1300",
      "M1355 -5L1375 80L1100 300L990 400L870 490",
      "M430 0L440 130",
    ],
    highways: ["M-5 612L240 390L370 240L500 165L470 -5"],
    streets: [
      "M20 20L180 180M60 0L230 160M0 90L100 210L0 320M80 60L0 130M120 200L20 300M170 240L90 350M210 280L120 390M0 400L80 520",
      "M370 200L460 120M520 260L620 350M560 230L660 320M600 200L700 290M640 170L740 240M700 240L790 210M450 250L560 350M480 380L640 240",
      "M240 600L420 740M280 540L460 660M320 510L480 620M200 640L350 770M160 700L320 820M210 640V720M300 570L240 690M380 590L290 740",
      "M590 730L700 740M560 700H690M740 730L830 690M730 760L860 700M720 790L880 730M780 610L700 720M830 640L760 760M800 860L930 780",
      "M900 700L980 860M940 680L1020 830M990 670L1060 810M1040 650L1110 790M1090 630L1150 770M1140 610L1190 740M1240 560L1300 740M1290 540L1360 720",
      "M1250 650L1460 560M1260 700L1483 620M1300 760L1483 690M1220 580L1260 800M1340 540L1400 700M1400 530L1450 690",
      "M820 850L900 800L1030 820M860 980L940 900L1040 860M900 1020L1000 900M940 1060L1060 940M860 980L780 1080L770 1200M820 1040L900 1100",
      "M660 1020L750 1010L800 950M550 1090L630 1110L620 1160M560 1170L580 1130M780 1080L870 1140L830 1220M900 1150L850 1250",
      "M1000 1150L1130 1160M980 1190L1150 1200M1060 1240L1180 1230M940 1330H1180M960 1380L1200 1390M970 1430L1210 1440M980 1490H1220",
      "M1040 1310L1060 1500M1090 1300L1120 1500M1140 1300L1170 1500M1200 1300L1400 1240M1220 1360L1420 1320M1240 1420L1440 1380",
      "M550 1310H670M560 1360H670M550 1400H660M540 1440H655M600 1230L590 1300M640 1230V1310M580 1380L560 1528M620 1380L610 1528",
      "M700 1270L920 1310M690 1310L780 1320M800 1240V1310M1260 950L1300 1100M1280 1040L1400 980M1300 1090L1430 1040M1350 920L1440 1160",
      "M1100 700L1180 880M1160 840L1240 890M1230 1000L1280 980M1090 1050L1230 1100M1140 1120L1250 1140M1200 1200L1330 1160",
    ],
  },
]

function MapCanvas() {
  return (
    <svg
      viewBox="0 0 1218 1196"
      preserveAspectRatio="xMidYMid slice"
      className="absolute inset-0 size-full font-['Roboto',sans-serif]"
      role="img"
      aria-label="Noutopisteet kartalla"
    >
      <defs>
        <filter id="pin-shadow" x="-60%" y="-60%" width="220%" height="220%">
          <feDropShadow dx="0" dy="10" stdDeviation="12" floodColor="#000" floodOpacity="0.18" />
        </filter>
        <path id="yderhavnen" d="M988 230Q1040 172 1130 164" />
      </defs>

      {tiles.map((tile) => (
        <g key={tile.transform} transform={tile.transform} strokeLinejoin="round">
          {tile.parks.map((points) => (
            <polygon key={points} points={points} fill="#e9e9eb" />
          ))}
          {tile.streets.map((d) => (
            <path key={d} d={d} fill="none" stroke="#fdfdfd" strokeWidth="1" vectorEffect="non-scaling-stroke" />
          ))}
          {tile.water.map((d) => (
            <path key={d} d={d} fill="#dbdbdb" />
          ))}
          {tile.islands?.map((points, i) => (
            <polygon key={points} points={points} fill={tile.islands.length > 1 && i === 0 ? "#e9e9eb" : "#f7f7f8"} />
          ))}
          {tile.canals.map(({ d, w }) => (
            <path key={d} d={d} fill="none" stroke="#dbdbdb" strokeWidth={w} vectorEffect="non-scaling-stroke" />
          ))}
          {tile.roads.map((d) => (
            <path key={d} d={d} fill="none" stroke="#fdfdfd" strokeWidth="3" vectorEffect="non-scaling-stroke" />
          ))}
          {tile.highways.map((d) => (
            <path key={d} d={d} fill="none" stroke="#fff" strokeWidth="4" vectorEffect="non-scaling-stroke" />
          ))}
        </g>
      ))}

      {/* piers, the citadel ramparts and the breakwater */}
      <g fill="none" stroke="#fbfbfb">
        <path d="M1092 72L1111 67L1130 78L1124 98L1112 90M1092 72L1102 92" strokeWidth="4" />
        <path d="M1181 0Q1206 34 1208 80Q1206 106 1200 124" strokeWidth="3" />
        <path d="M956 98L948 180L942 236M926 172L922 234" strokeWidth="5" />
        <path d="M898 46L902 70M914 44L918 70M928 72L960 36" strokeWidth="4" />
        <path d="M840 30L934 14" strokeWidth="1" />
      </g>
      <path
        d="M873 290L901 297L922 290L914 322L928 338L922 356L905 358L882 375L866 350L845 325L868 308Z"
        fill="none"
        stroke="#cfcfcf"
        strokeWidth="2"
      />
      <path d="M874 300L884 304L900 300L896 318L899 342L884 340L876 334L873 318Z" fill="#f7f7f8" />
      <path d="M945 8L990 14L984 18L970 14L938 2L945 -2H990V10Z" fill="#f7f7f8" />

      <MapLabels />

      <Pin x={610} y={554} />
      <Pin x={632} y={512} />
      <Pin x={656} y={472} />
    </svg>
  )
}

const districts = [
  { x: 755, y: 48, text: "ØSTERBRO" },
  { x: 314, y: 238, text: "NØRREBRO" },
  { x: 188, y: 850, text: "CARLSBERG" },
  { x: 400, y: 855, text: "VESTERBRO" },
  { x: 823, y: 724, text: "CHRISTIANSHAVN" },
  { x: 946, y: 840, text: "AMAGERBRO" },
  { x: 726, y: 940, text: "BALLONPARKEN" },
  { x: 757, y: 502, text: "INDRE BY" },
  { x: 1199, y: 1072, text: "SUNDBY" },
  { x: -14, y: 942, text: "VALBY" },
]

const quarters = [
  { x: 472, y: 252, text: "DE GAMLES" },
  { x: 472, y: 278, text: "BY" },
  { x: 879, y: 449, text: "FREDERIKSSTADEN" },
  { x: 1132, y: 464, text: "MARGRETHEHOLM" },
  { x: 201, y: 1156, text: "FREDERIKSHOLM" },
  { x: 394, y: 1170, text: "TEGLHOLMEN" },
]

const mainStreets = [
  { x: 241, y: 363, rotate: 53, text: "Ågade" },
  { x: 191, y: 546, rotate: -61, text: "Falkoner Allé" },
  { x: 295, y: 876, rotate: -74, text: "Enghavevej" },
  { x: 430, y: 160, rotate: -55, text: "Jagtvej" },
  { x: 1116, y: 970, rotate: -11, text: "Øresundsvej" },
]

const sideStreets = [
  { x: 90, y: 2, rotate: 28, text: "tervej" },
  { x: 103, y: 98, rotate: 33, text: "Ørnevej" },
  { x: 118, y: 358, rotate: -61, text: "Duevej" },
  { x: 619, y: 261, rotate: -44, text: "Ryesgade" },
  { x: 845, y: 97, rotate: 85, text: "Østbanegade" },
  { x: 42, y: 999, rotate: 86, text: "Bjørnsonsvej" },
]

function MapLabels() {
  return (
    <g stroke="#f7f7f8" strokeWidth="4" strokeLinejoin="round" paintOrder="stroke">
      <g fill="#b8b8b8" textAnchor="middle">
        {districts.map((l) => (
          <text key={l.text} x={l.x} y={l.y} className="text-[23px] tracking-widest">
            {l.text}
          </text>
        ))}
        {quarters.map((l) => (
          <text key={l.text} x={l.x} y={l.y} className="text-[22px] tracking-wide">
            {l.text}
          </text>
        ))}
      </g>
      <g fill="#8c8c8e">
        {mainStreets.map((l) => (
          <text key={l.text} transform={`translate(${l.x} ${l.y}) rotate(${l.rotate})`} className="text-[22px]">
            {l.text}
          </text>
        ))}
        {sideStreets.map((l) => (
          <text key={l.text} transform={`translate(${l.x} ${l.y}) rotate(${l.rotate})`} className="text-[20px]">
            {l.text}
          </text>
        ))}
      </g>
      <g fill="#a8a8a8" className="text-[22px] italic">
        <text x="598" y="112">Parken</text>
        <text x="1078" y="113">Trekroner</text>
        <text x="170" y="448" textAnchor="end">Frederiksberg Hospital</text>
        <text x="111" y="729" textAnchor="end">Zoologisk Have</text>
        <text x="92" y="757" textAnchor="end">København</text>
        <text x="936" y="664">Freetown Christiania</text>
      </g>
      <g fill="#9a9a9c" className="text-[28px] italic">
        <text x="419" y="1083">Sydhavnen</text>
        <text stroke="none">
          <textPath href="#yderhavnen">Yderhavnen</textPath>
        </text>
      </g>
      <g fill="#9a9a9c" className="font-medium">
        <text x="64" y="611" className="text-[34px]">Frederiksberg</text>
        <text x="1054" y="1179" className="text-[28px]">Sundby</text>
        <text x="488" y="434" className="text-[42px]" fill="#7d7d7d">Copenhagen</text>
      </g>
    </g>
  )
}

function Pin({ x, y }: { x: number; y: number }) {
  return (
    <g transform={`translate(${x} ${y})`}>
      <path d="M-9 43H9L0 56Z" fill="#23217a" />
      <circle r="44" fill="#23217a" filter="url(#pin-shadow)" />
      <g transform="translate(-19 -20) scale(0.46)">
        <LogoShape body="#fff" accent="#ff9d00" holes="#23217a" />
      </g>
    </g>
  )
}

type LogoColors = { body: string; accent: string; holes: string }

function Logo({ className, ...colors }: LogoColors & { className?: string }) {
  return (
    <svg viewBox="0 0 84 86" className={className} aria-hidden="true">
      <LogoShape {...colors} />
    </svg>
  )
}

function LogoShape({ body, accent, holes }: LogoColors) {
  return (
    <>
      <path
        d="M39 1Q42 -1 45 1L58 8Q61 10 58 12L27 29Q21 33 21 40Q20 45 17 47Q14 49 11 47L2 43Q0 42 0 38V23Q0 21 3 20Z"
        fill={accent}
      />
      <path
        d="M64 15Q67 12 71 15L82 21Q84 22 84 25V61Q84 64 81 66L45 85Q42 87 39 85L3 66Q0 64 0 61V50L8 54Q15 56 21 52Q26 48 26 40Q27 34 31 32Z"
        fill={body}
      />
      <path d="M50 47L78 31Q80 30 80 32V44L50 59Q48 60 48 58V49Q48 48 50 47Z" fill={holes} />
      <ellipse cx="53" cy="70" rx="4.5" ry="5" transform="rotate(20 53 70)" fill={holes} />
      <ellipse cx="75" cy="58" rx="4.5" ry="5" transform="rotate(20 75 58)" fill={holes} />
    </>
  )
}
